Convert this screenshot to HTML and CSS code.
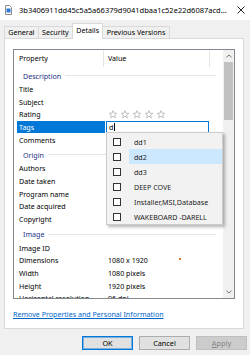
FILE: index.html
```html
<!doctype html>
<html lang="en">
  <head>
    <meta charset="UTF-8" />
    <title>Properties</title>
    <link rel="stylesheet" href="styles.css">
  </head>
  <body>
    <div class="titlebar">
      <svg class="file-icon" viewBox="0 0 7 10">
        <path d="M0.5 0.5 H4.5 L6.5 2.5 V9.5 H0.5 Z" fill="#fff" stroke="#8a8a8a" stroke-width="1" />
        <rect x="1.5" y="3.5" width="4" height="4" fill="#2b7bd6" />
      </svg>
      <span class="title">3b3406911dd45c5a5a66379d9041dbaa1c52e22d6087acd...</span>
      <svg class="close" viewBox="0 0 8 8">
        <path d="M0.5 0.5 L7.5 7.5 M7.5 0.5 L0.5 7.5" stroke="#111" stroke-width="0.9" />
      </svg>
    </div>

    <div class="tabs">
      <div class="tab">General</div>
      <div class="tab">Security</div>
      <div class="tab active">Details</div>
      <div class="tab">Previous Versions</div>
    </div>

    <div class="panel">
      <div class="listview">
        <div class="list">
          <div class="list-head">
            <span class="head-prop">Property</span>
            <span class="head-val">Value</span>
          </div>

          <div class="group"><span>Description</span></div>
          <div class="row"><span class="prop">Title</span><span class="val"></span></div>
          <div class="row"><span class="prop">Subject</span><span class="val"></span></div>
          <div class="row">
            <span class="prop">Rating</span>
            <span class="val">
              <svg class="stars" viewBox="0 0 56 9">
                <g fill="none" stroke="#b4b4b4" stroke-width="0.8">
                  <path id="star" d="M4 0.5 L5 3.2 L7.8 3.3 L5.6 5 L6.4 7.8 L4 6.2 L1.6 7.8 L2.4 5 L0.2 3.3 L3 3.2 Z" />
                  <use href="#star" x="12" />
                  <use href="#star" x="24" />
                  <use href="#star" x="36" />
                  <use href="#star" x="48" />
                </g>
              </svg>
            </span>
          </div>
          <div class="row">
            <span class="prop"><span class="selected">Tags</span></span>
            <span class="val"><span class="edit">d<span class="caret"></span></span></span>
          </div>
          <div class="row"><span class="prop">Comments</span><span class="val"></span></div>

          <div class="group"><span>Origin</span></div>
          <div class="row"><span class="prop">Authors</span><span class="val"></span></div>
          <div class="row"><span class="prop">Date taken</span><span class="val"></span></div>
          <div class="row"><span class="prop">Program name</span><span class="val"></span></div>
          <div class="row"><span class="prop">Date acquired</span><span class="val"></span></div>
          <div class="row"><span class="prop">Copyright</span><span class="val"></span></div>

          <div class="group"><span>Image</span></div>
          <div class="row"><span class="prop">Image ID</span><span class="val"></span></div>
          <div class="row">
            <span class="prop">Dimensions</span>
            <span class="val">1080 x 1920<span class="dot"></span></span>
          </div>
          <div class="row"><span class="prop">Width</span><span class="val">1080 pixels</span></div>
          <div class="row"><span class="prop">Height</span><span class="val">1920 pixels</span></div>
          <div class="row"><span class="prop">Horizontal resolution</span><span class="val">96 dpi</span></div>
        </div>

        <div class="scrollbar">
          <div class="scroll-btn">
            <svg viewBox="0 0 7 4"><path d="M0.5 3.5 L3.5 0.8 L6.5 3.5" fill="none" stroke="#606060" stroke-width="1" /></svg>
          </div>
          <div class="thumb"></div>
          <div class="track"></div>
          <div class="scroll-btn">
            <svg viewBox="0 0 7 4"><path d="M0.5 0.5 L3.5 3.2 L6.5 0.5" fill="none" stroke="#606060" stroke-width="1" /></svg>
          </div>
        </div>

        <div class="dropdown">
          <div class="item"><span class="check"></span>dd1</div>
          <div class="item hover"><span class="check"></span>dd2</div>
          <div class="item"><span class="check"></span>dd3</div>
          <div class="item"><span class="check"></span>DEEP COVE</div>
          <div class="item"><span class="check"></span>Installer,MSI,Database</div>
          <div class="item"><span class="check"></span>WAKEBOARD -DARELL</div>
        </div>
      </div>

      <a class="remove-link" href="#">Remove Properties and Personal Information</a>
    </div>

    <div class="buttons">
      <button class="btn btn-default">OK</button>
      <button class="btn">Cancel</button>
      <button class="btn btn-disabled"><u>A</u>pply</button>
    </div>
  </body>
</html>
```

FILE: styles.css
```css
* {
  box-sizing: border-box;
}
body {
  margin: 0;
  width: 250px;
  height: 355px;
  overflow: hidden;
  background-color: #f0f0f0;
  font-family: "Noto Sans", "Liberation Sans", sans-serif;
  font-size: 7.1px;
  color: #000;
}
.titlebar {
  height: 20px;
  background-color: #fff;
  display: flex;
  align-items: center;
  padding: 0 5px;
}
.file-icon {
  width: 7px;
  height: 10px;
  margin-right: 7px;
}
.title {
  flex: 1;
  white-space: nowrap;
  overflow: hidden;
  font-size: 7.5px;
}
.close {
  width: 8px;
  height: 8px;
}
.tabs {
  height: 18px;
  display: flex;
  align-items: flex-end;
  padding-left: 4px;
}
.tab {
  height: 12px;
  line-height: 11px;
  padding: 0 3.3px;
  margin-right: -1px;
  border: 1px solid #d9d9d9;
  border-bottom: none;
  background-color: #f0f0f0;
  white-space: nowrap;
}
.tab.active {
  position: relative;
  z-index: 1;
  height: 16px;
  line-height: 13px;
  margin-bottom: -1px;
  background-color: #fff;
}
.panel {
  height: 291px;
  margin: 0 6px 0 4px;
  padding: 10px 8px 0 8px;
  background-color: #fff;
  border: 1px solid #d9d9d9;
}
.listview {
  position: relative;
  height: 250px;
  display: flex;
  border: 1px solid #828790;
}
.list {
  flex: 1;
  overflow: hidden;
}
.list-head {
  height: 16.5px;
  display: grid;
  grid-template-columns: 90px 106px;
  align-items: stretch;
}
.head-prop,
.head-val {
  display: flex;
  align-items: center;
  border-right: 1px solid #e5e5e5;
}
.head-prop {
  padding-left: 5px;
}
.head-val {
  padding-left: 4px;
}
.group {
  height: 16px;
  display: flex;
  align-items: center;
  padding: 2px 7px 0 9px;
  color: #1e3287;
}
.group::after {
  content: "";
  flex: 1;
  height: 1px;
  margin-left: 4px;
  background-color: #e2e6ee;
}
.row {
  height: 12.7px;
  display: grid;
  grid-template-columns: 91px 1fr;
  align-items: center;
  white-space: nowrap;
}
.prop {
  padding-left: 5px;
}
.val {
  display: flex;
  align-items: center;
  padding-left: 3px;
}
.selected {
  display: block;
  height: 12px;
  line-height: 12px;
  margin-left: -2px;
  padding-left: 2px;
  background-color: #0078d7;
  color: #fff;
}
.edit {
  display: flex;
  align-items: center;
  width: 103px;
  height: 12px;
  margin-left: -2px;
  padding-left: 2px;
  border: 1px solid #0078d7;
  background-color: #fff;
}
.caret {
  width: 1px;
  height: 8px;
  margin-left: 0.5px;
  background-color: #000;
}
.stars {
  width: 56px;
  height: 9px;
  margin-left: 1px;
}
.dot {
  width: 2px;
  height: 2px;
  margin-left: 31px;
  margin-top: -2px;
  background-color: #e07a2e;
}
.scrollbar {
  width: 11px;
  display: flex;
  flex-direction: column;
  background-color: #f0f0f0;
}
.scroll-btn {
  height: 12px;
  display: flex;
  align-items: center;
  justify-content: center;
}
.scroll-btn svg {
  width: 6px;
  height: 4px;
}
.thumb {
  height: 58px;
  margin: 0 1px;
  background-color: #c1c1c1;
}
.track {
  flex: 1;
}
.dropdown {
  position: absolute;
  left: 92px;
  top: 82px;
  width: 117px;
  height: 93px;
  padding-top: 1px;
  background-color: #f2f2f2;
  border: 1px solid #cccccc;
  box-shadow: 2px 2px 3px rgba(0, 0, 0, 0.3);
  z-index: 2;
}
.item {
  position: relative;
  height: 15px;
  display: flex;
  align-items: center;
  padding-left: 27px;
  color: #222;
  white-space: nowrap;
}
.item.hover::before {
  content: "";
  position: absolute;
  left: 22px;
  top: 0;
  right: 0;
  bottom: 0;
  background-color: #cce8ff;
  z-index: -1;
}
.check {
  position: absolute;
  left: 6px;
  top: 3.5px;
  width: 8px;
  height: 8px;
  border: 1px solid #333;
  background-color: #fff;
}
.remove-link {
  display: block;
  margin-top: 10px;
  line-height: 10px;
  color: #0066cc;
  text-decoration: underline;
  white-space: nowrap;
}
.buttons {
  display: flex;
  justify-content: flex-end;
  gap: 6px;
  padding: 7px 3px 0 0;
}
.btn {
  width: 51px;
  height: 14px;
  padding: 0;
  font-family: inherit;
  font-size: 7.3px;
  color: #000;
  background-color: #e1e1e1;
  border: 1px solid #adadad;
}
.btn-default {
  border-color: #0078d7;
  box-shadow: inset 0 0 0 1px rgba(0, 120, 215, 0.45);
}
.btn-disabled {
  background-color: #cccccc;
  border-color: #bfbfbf;
  color: #838383;
}
```
